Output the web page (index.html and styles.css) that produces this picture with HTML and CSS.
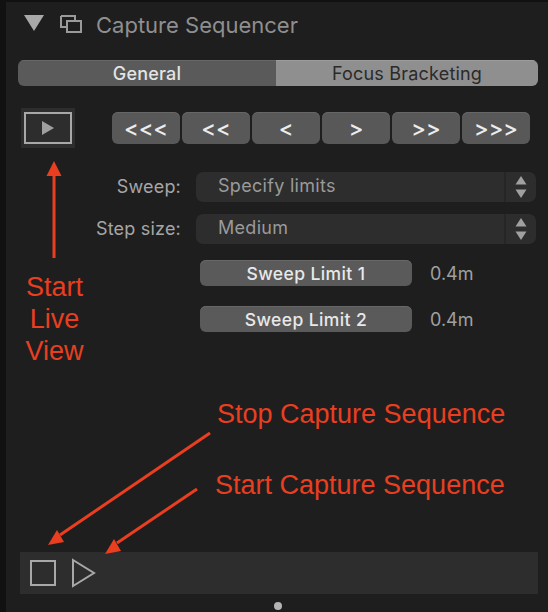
FILE: index.html
```html
<!DOCTYPE html>
<html lang="en">
<head>
    <meta charset="UTF-8">
    <title>Capture Sequencer</title>
    <link rel="stylesheet" href="styles.css">
</head>
<body>
    <div class="panel">
        <div class="panel-header">
            <svg class="collapse-icon" width="20" height="16" viewBox="0 0 20 16"><path d="M0 0H20L10 16Z"/></svg>
            <svg class="windows-icon" width="22" height="20" viewBox="0 0 22 20"><path d="M1 1H15V6M6 6H21V17H7V6M1 1V12H7"/></svg>
            <div class="panel-title">Capture Sequencer</div>
        </div>

        <div class="tabs">
            <div class="tab tab-active">General</div>
            <div class="tab">Focus Bracketing</div>
        </div>

        <div class="live-row">
            <div class="live-button">
                <div class="live-frame">
                    <svg width="14" height="16" viewBox="0 0 14 16"><path d="M1 1L13 8L1 15Z"/></svg>
                </div>
            </div>
            <div class="nav-buttons">
                <div class="nav-button">&lt;&lt;&lt;</div>
                <div class="nav-button">&lt;&lt;</div>
                <div class="nav-button">&lt;</div>
                <div class="nav-button">&gt;</div>
                <div class="nav-button">&gt;&gt;</div>
                <div class="nav-button">&gt;&gt;&gt;</div>
            </div>
        </div>

        <div class="field-row">
            <div class="field-label">Sweep:</div>
            <div class="select">
                <div class="select-value">Specify limits</div>
                <div class="select-arrows">
                    <svg width="12" height="22" viewBox="0 0 12 22"><path d="M6 0L11.5 8.500H.5ZM.5 13.500H11.500L6 22Z"/></svg>
                </div>
            </div>
        </div>
        <div class="field-row">
            <div class="field-label">Step size:</div>
            <div class="select">
                <div class="select-value">Medium</div>
                <div class="select-arrows">
                    <svg width="12" height="22" viewBox="0 0 12 22"><path d="M6 0L11.5 8.500H.5ZM.5 13.500H11.500L6 22Z"/></svg>
                </div>
            </div>
        </div>

        <div class="limit-row">
            <div class="limit-button">Sweep Limit 1</div>
            <div class="limit-value">0.4m</div>
        </div>
        <div class="limit-row">
            <div class="limit-button">Sweep Limit 2</div>
            <div class="limit-value">0.4m</div>
        </div>

        <div class="toolbar">
            <div class="stop-icon"></div>
            <svg class="start-icon" width="24" height="30" viewBox="0 0 24 30"><path d="M1 2L22 15L1 28Z"/></svg>
        </div>
        <div class="page-dot"></div>
    </div>

    <!-- red notes drawn over the screenshot -->
    <svg class="arrows" width="548" height="612" viewBox="0 0 548 612">
        <path class="arrow-line" d="M54 258V172"/>
        <path class="arrow-head" d="M54 161L61.500 176H46.500Z"/>
        <path class="arrow-line" d="M210 433L60 535"/>
        <path class="arrow-head" d="M48 545L57 530L64 542Z"/>
        <path class="arrow-line" d="M197 489L117 543"/>
        <path class="arrow-head" d="M105 554L114 539L121 551Z"/>
    </svg>
    <div class="note note-live">Start<br>Live<br>View</div>
    <div class="note note-stop">Stop Capture Sequence</div>
    <div class="note note-start">Start Capture Sequence</div>
</body>
</html>
```

FILE: styles.css
```css
body {
    margin: 0;
    background-color: #111111;
    font-family: Inter, "Noto Sans", sans-serif;
    overflow: hidden;
}
.panel {
    width: 542px;
    height: 610px;
    margin: 2px 0 0 6px;
    background-color: #1e1e1e;
    position: relative;
}
.panel-header {
    height: 46px;
    display: flex;
    align-items: center;
    padding-left: 18px;
}
.collapse-icon {
    fill: #a8a8a8;
    margin-bottom: 4px;
}
.windows-icon {
    fill: none;
    stroke: #9a9a9a;
    stroke-width: 2;
    margin-left: 16px;
}
.panel-title {
    color: #8f8f8f;
    font-size: 22px;
    margin-left: 14px;
    white-space: nowrap;
}
.tabs {
    display: flex;
    width: 520px;
    height: 26px;
    margin: 12px 0 0 12px;
    border-radius: 6px;
    overflow: hidden;
    font-size: 18px;
    letter-spacing: 0.2px;
}
.tab {
    flex: 1;
    display: flex;
    align-items: center;
    justify-content: center;
    color: #2a2a2a;
    background-color: #8f8f8f;
    box-shadow: inset 0 1px 0 #9c9c9c;
}
.tab-active {
    flex: 0 0 258px;
    color: #e4e4e4;
    background-color: #5a5a5a;
    box-shadow: inset 0 1px 0 #686868;
    font-weight: 500;
}
.live-row {
    display: flex;
    align-items: center;
    margin-top: 22px;
    padding-left: 15px;
}
.live-button {
    width: 54px;
    height: 40px;
    background-color: #2d2d2d;
    display: flex;
    align-items: center;
    justify-content: center;
}
.live-frame {
    width: 44px;
    height: 28px;
    border: 2px solid #a8a8a8;
    display: flex;
    align-items: center;
    justify-content: center;
}
.live-frame svg {
    fill: #a0a0a0;
}
.nav-buttons {
    display: flex;
    gap: 2px;
    margin-left: 37px;
}
.nav-button {
    width: 68px;
    height: 32px;
    border-radius: 6px;
    background-color: #585858;
    box-shadow: inset 0 1px 0 #666666;
    color: #ececec;
    font-size: 22px;
    font-weight: 500;
    display: flex;
    align-items: center;
    justify-content: center;
}
.field-row {
    display: flex;
    align-items: center;
    height: 30px;
    margin-top: 12px;
}
.live-row + .field-row {
    margin-top: 24px;
}
.field-label {
    width: 175px;
    text-align: right;
    color: #a6a6a6;
    font-size: 18px;
    letter-spacing: 0.2px;
    line-height: 28px;
}
.select {
    width: 340px;
    height: 30px;
    margin-left: 15px;
    border-radius: 7px;
    background-color: #2d2d2d;
    display: flex;
}
.select-value {
    flex: 1;
    padding-left: 22px;
    color: #9a9a9a;
    font-size: 18px;
    letter-spacing: 0.3px;
    line-height: 28px;
    border-right: 2px solid #262626;
}
.select-arrows {
    width: 30px;
    display: flex;
    align-items: center;
    justify-content: center;
}
.select-arrows svg {
    fill: #a0a0a0;
}
.limit-row {
    display: flex;
    align-items: center;
    margin: 20px 0 0 194px;
}
.field-row + .limit-row {
    margin-top: 16px;
}
.limit-button {
    width: 212px;
    height: 26px;
    border-radius: 6px;
    background-color: #5a5a5a;
    box-shadow: inset 0 1px 0 #686868;
    color: #e8e8e8;
    font-size: 17.500px;
    font-weight: 500;
    letter-spacing: 0.4px;
    display: flex;
    align-items: center;
    justify-content: center;
}
.limit-value {
    margin-left: 18px;
    color: #a0a0a0;
    font-size: 18px;
}
.toolbar {
    position: absolute;
    left: 14px;
    top: 550px;
    width: 518px;
    height: 42px;
    background-color: #2d2d2d;
    display: flex;
    align-items: center;
}
.stop-icon {
    width: 22px;
    height: 22px;
    margin-left: 10px;
    border: 2px solid #a8a8a8;
}
.start-icon {
    fill: none;
    stroke: #a8a8a8;
    stroke-width: 2;
    margin-left: 16px;
}
.page-dot {
    position: absolute;
    left: 268px;
    top: 600px;
    width: 8px;
    height: 8px;
    border-radius: 50%;
    background-color: #b4b4b4;
}
.arrows {
    position: absolute;
    left: 0;
    top: 0;
}
.arrow-line {
    fill: none;
    stroke: #e93e20;
    stroke-width: 3;
}
.arrow-head {
    fill: #e93e20;
}
.note {
    position: absolute;
    color: #e93e20;
    font-family: "Liberation Sans", Arial, sans-serif;
    font-size: 27px;
    white-space: nowrap;
}
.note-live {
    left: 18px;
    top: 271px;
    width: 73px;
    text-align: center;
    line-height: 32px;
}
.note-stop {
    left: 217px;
    top: 399px;
}
.note-start {
    left: 215px;
    top: 470px;
}
```
